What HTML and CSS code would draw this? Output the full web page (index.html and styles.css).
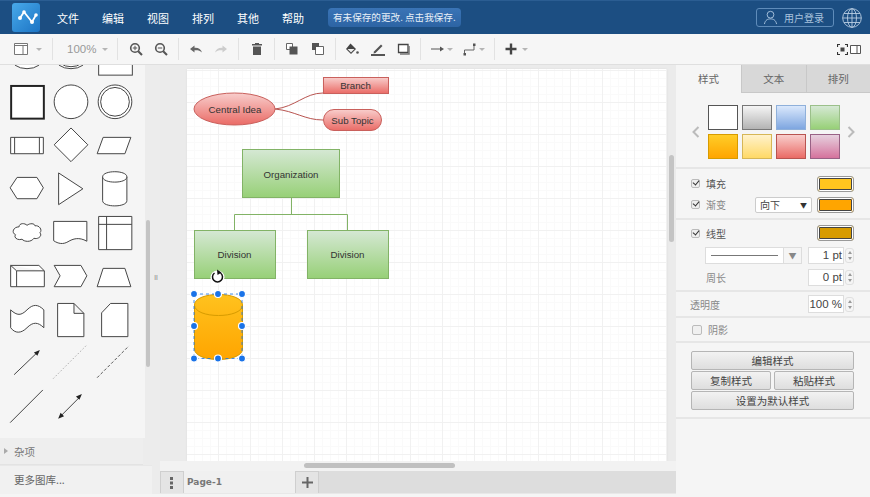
FILE: index.html
```html
<!DOCTYPE html>
<html lang="zh">
<head>
<meta charset="utf-8">
<title>Diagram editor</title>
<link rel="stylesheet" href="styles.css">
</head>
<body>
<div class="app">
  <header class="menubar">
    <div class="logo">
      <svg viewBox="0 0 28 29" width="28" height="29"><path d="M8 15 L12 9 L20 19 L24 12" fill="none" stroke="#fff" stroke-width="1.800"/><circle cx="8" cy="15" r="2" fill="#fff"/><circle cx="12" cy="9" r="1.800" fill="#fff"/><circle cx="20" cy="19" r="2" fill="#fff"/><circle cx="24" cy="12" r="1.800" fill="#fff"/></svg>
    </div>
    <nav class="menus"><span>文件</span><span>编辑</span><span>视图</span><span>排列</span><span>其他</span><span>帮助</span></nav>
    <div class="status">有未保存的更改. 点击我保存.</div>
    <div class="login">
      <svg viewBox="0 0 16 16" width="15" height="15"><circle cx="8" cy="5" r="3.6" fill="none" stroke="#a9c3de" stroke-width="1"/><path d="M1.5 15 C2.5 10.5 5 9.5 8 9.5 S13.500 10.500 14.500 15" fill="none" stroke="#a9c3de" stroke-width="1"/></svg>
      <span>用户登录</span>
    </div>
    <svg class="globe" viewBox="0 0 20 20" width="20" height="20"><g fill="none" stroke="#b9cde2" stroke-width=".9"><circle cx="10" cy="10" r="9.300"/><ellipse cx="10" cy="10" rx="4.500" ry="9.300"/><path d="M10 .7V19.300M.7 10H19.300M2 5.500H18M2 14.500H18"/></g></svg>
  </header>

  <div class="toolbar">
    <div class="group g-view">
      <svg viewBox="0 0 14 14" width="14" height="14"><path d="M.5 1.500H13.500V12.500H.5ZM.5 3.500H13.500M9 3.500V12.500" fill="#fff" stroke="#777"/></svg>
      <i class="caret"></i>
    </div>
    <div class="group g-zoom"><span class="pct">100%</span><i class="caret"></i></div>
    <div class="group g-pair">
      <svg viewBox="0 0 14 14" width="14" height="14"><circle cx="6" cy="6" r="4.300" fill="none" stroke="#555" stroke-width="1.600"/><path d="M9.200 9.200L13 13" stroke="#555" stroke-width="2"/><path d="M3.800 6H8.200M6 3.800V8.200" stroke="#555"/></svg>
      <svg viewBox="0 0 14 14" width="14" height="14"><circle cx="6" cy="6" r="4.300" fill="none" stroke="#555" stroke-width="1.600"/><path d="M9.200 9.200L13 13" stroke="#555" stroke-width="2"/><path d="M3.800 6H8.200" stroke="#555"/></svg>
    </div>
    <div class="group g-pair">
      <svg viewBox="0 0 14 14" width="14" height="14"><path d="M1 7L5.500 3.500V5.800C9.500 5.500 12 7.500 13 10.500C11 8.500 9 8 5.500 8.200V10.500Z" fill="#666"/></svg>
      <svg viewBox="0 0 14 14" width="14" height="14"><path d="M13 7L8.500 3.500V5.800C4.500 5.500 2 7.500 1 10.500C3 8.500 5 8 8.500 8.200V10.500Z" fill="#ccc"/></svg>
    </div>
    <div class="group g-one">
      <svg viewBox="0 0 14 14" width="14" height="14"><path d="M2 2H5V1H9V2H12V3.500H2ZM3 4.500H11V13H3Z" fill="#555"/></svg>
    </div>
    <div class="group g-pair g-order">
      <svg viewBox="0 0 14 14" width="14" height="14"><path d="M1.500 1.500H7.500V7.500H1.500Z" fill="#fff" stroke="#666"/><path d="M4.500 4.500H12.500V12.500H4.500Z" fill="#555"/></svg>
      <svg viewBox="0 0 14 14" width="14" height="14"><path d="M4.500 4.500H12.500V12.500H4.500Z" fill="#fff" stroke="#666"/><path d="M1 1H8V8H1Z" fill="#555"/><path d="M5 5H8V8H5Z" fill="#fff"/></svg>
    </div>
    <div class="group g-style">
      <svg viewBox="0 0 14 14" width="14" height="14"><path d="M5.500 1.500L11 7L6 12L1 7Z" fill="#444"/><path d="M2.500 7H9.500L6 10.500Z" fill="#eee"/><circle cx="12.500" cy="10.500" r="1.300" fill="#555"/></svg>
      <svg viewBox="0 0 14 14" width="14" height="14"><path d="M3 9.500L10 2.500L11.500 4L4.500 11L2.500 11.500Z" fill="#555"/><path d="M0 13H14" stroke="#555" stroke-width="2"/></svg>
      <svg viewBox="0 0 14 14" width="14" height="14"><path d="M1.500 2.500H11V10.500H1.500Z" fill="#fff" stroke="#444" stroke-width="1.300"/><path d="M12 4V12H3" fill="none" stroke="#777" stroke-width="1.500"/></svg>
    </div>
    <div class="group g-conn">
      <span class="tool"><svg viewBox="0 0 13 8" width="13" height="8"><path d="M0 4H10" stroke="#555"/><path d="M9 1.500L13 4L9 6.500Z" fill="#555"/></svg><i class="caret"></i></span>
      <span class="tool"><svg viewBox="0 0 13 13" width="13" height="13"><path d="M1.500 11.500V7H11V1.500" fill="none" stroke="#666"/><rect x=".5" y="10" width="2.500" height="2.500" fill="#555"/><rect x="10" y=".5" width="2.500" height="2.500" fill="#555"/></svg><i class="caret"></i></span>
    </div>
    <div class="group g-plus">
      <svg viewBox="0 0 12 12" width="12" height="12"><path d="M6 .5V11.500M.5 6H11.500" stroke="#444" stroke-width="2.400"/></svg>
      <i class="caret"></i>
    </div>
    <div class="tool-right">
      <svg viewBox="0 0 11 11" width="11" height="11"><path d="M.5 3V.5H3M8 .5H10.500V3M10.500 8V10.500H8M3 10.500H.5V8" fill="none" stroke="#333" stroke-width="1.200"/><rect x="3.500" y="3.500" width="4" height="4" fill="#444"/></svg>
      <svg viewBox="0 0 11 11" width="11" height="11"><path d="M.5 1.500H10.500V9.500H.5ZM7 1.500V9.500" fill="#fff" stroke="#555"/></svg>
    </div>
  </div>

  <div class="main">
    <aside class="sidebar">
      <div class="library">
        <div class="shapes">
          <svg viewBox="0 0 44 44"><ellipse cx="22" cy="21" rx="17" ry="12"/></svg>
          <svg viewBox="0 0 44 44"><ellipse cx="22" cy="21" rx="17" ry="12"/><ellipse cx="22" cy="20" rx="15" ry="11"/></svg>
          <svg viewBox="0 0 44 44"><rect x="5.500" y="9.500" width="34" height="30"/></svg>

          <svg viewBox="0 0 44 44"><rect class="thick" x="6" y="6" width="33" height="33"/></svg>
          <svg viewBox="0 0 44 44"><circle cx="22" cy="22" r="17"/></svg>
          <svg viewBox="0 0 44 44"><circle cx="22" cy="22" r="17"/><circle cx="22" cy="22" r="14.500"/></svg>

          <svg viewBox="0 0 44 44"><path d="M5.500 14.500H38.500V31H5.500ZM9.500 14.500V31M34.500 14.500V31"/></svg>
          <svg viewBox="0 0 44 44"><path d="M22 5L39 22L22 39L5 22Z"/></svg>
          <svg viewBox="0 0 44 44"><path d="M10 14.500H38L32 31H4Z"/></svg>

          <svg viewBox="0 0 44 44"><path d="M5 21L12 10.500H32L38.500 21L32 32H12Z"/></svg>
          <svg viewBox="0 0 44 44"><path d="M9.500 6L34 22L9.500 38Z"/></svg>
          <svg viewBox="0 0 44 44"><path d="M9.500 10C9.500 3 34 3 34 10V34C34 41 9.500 41 9.500 34Z"/><path d="M9.500 10C9.500 17 34 17 34 10"/></svg>

          <svg viewBox="0 0 44 44"><path d="M14 17C14 13 20 13 22 15.500C25 13 30 13.500 30 16C34 15 38 20 35 23C38 26 33 30 29 28.500C26 33 19 32 17 29.500C13 31 8 28 10.500 25C6 23 8 17 14 17Z"/></svg>
          <svg viewBox="0 0 44 44"><path d="M4.500 11.500H38V31.500C30 27 24 29 19 32C14 35 9 34 4.500 31Z"/></svg>
          <svg viewBox="0 0 44 44"><path d="M5.500 6.500H39V40H5.500ZM5.500 14.500H39M13.500 6.500V40"/></svg>

          <svg viewBox="0 0 44 44"><path d="M5.500 11.500H34L39.500 17V33H5.500ZM5.500 11.500L11.500 17H39.500M11.500 17V33"/></svg>
          <svg viewBox="0 0 44 44"><path d="M5 11.500H32L38 22L32 33H5L11 22Z"/></svg>
          <svg viewBox="0 0 44 44"><path d="M10 14.500H32L38 33H4Z"/></svg>

          <svg viewBox="0 0 44 44"><path d="M5.500 12C12 18 16 18 22 12C28 6 33 6 39 12V30C33 24 28 24 22 30C16 36 10 36 5.500 30Z"/></svg>
          <svg viewBox="0 0 44 44"><path d="M8.500 5.500H25L35 15.500V39H8.500ZM25 5.500V15.500H35"/></svg>
          <svg viewBox="0 0 44 44"><path d="M17.500 5.500H35V39H8.500V15Z"/></svg>

          <svg viewBox="0 0 44 44"><path d="M9 34L33 11"/><path class="solid" d="M35 9L32.500 15L29 11.500Z"/></svg>
          <svg viewBox="0 0 44 44"><path class="dots" d="M4 38L38 4"/></svg>
          <svg viewBox="0 0 44 44"><path class="dash" d="M4 37L36 5"/></svg>

          <svg viewBox="0 0 44 44"><path d="M5 38L38 5"/></svg>
          <svg viewBox="0 0 44 44"><path d="M11 32L31 12"/><path class="solid" d="M33 9L30.500 15L27 11.500ZM9 34L11.500 28L15 31.500Z"/></svg>
        </div>
      </div>
      <div class="section-head"><i class="tri"></i><span>杂项</span></div>
      <div class="more">更多图库...</div>
      <div class="side-thumb"></div>
    </aside>
    <div class="splitter"><span>II</span></div>
    <section class="center">
      <div class="canvas">
        <div class="page">
          <svg class="diagram" viewBox="187 69 480 392">
            <defs>
              <linearGradient id="red" x1="0" y1="0" x2="0" y2="1"><stop offset="0" stop-color="#f8cecc"/><stop offset="1" stop-color="#ea6b66"/></linearGradient>
              <linearGradient id="green" x1="0" y1="0" x2="0" y2="1"><stop offset="0" stop-color="#d5e8d4"/><stop offset="1" stop-color="#97d077"/></linearGradient>
              <linearGradient id="orange" x1="0" y1="0" x2="0" y2="1"><stop offset="0" stop-color="#ffc21e"/><stop offset="1" stop-color="#ffa500"/></linearGradient>
            </defs>
            <g class="edge-red">
              <path d="M275 109C295 107 305 93 323 93"/>
              <path d="M275 109C295 111 305 120 323 120"/>
            </g>
            <ellipse class="red" cx="234.500" cy="109" rx="40.500" ry="16"/>
            <rect class="red" x="323.500" y="77.500" width="65" height="16"/>
            <rect class="red" x="323.500" y="109.500" width="58" height="21" rx="10.500"/>
            <text x="235" y="113">Central Idea</text>
            <text x="355.500" y="89">Branch</text>
            <text x="352.500" y="123.500">Sub Topic</text>
            <path class="edge-green" d="M291.500 198V214M234.500 230V214.500H347.500V230"/>
            <rect class="green" x="242.500" y="149.500" width="97" height="48"/>
            <rect class="green" x="194.500" y="230.500" width="81" height="48"/>
            <rect class="green" x="307.500" y="230.500" width="81" height="48"/>
            <text x="291" y="177.500">Organization</text>
            <text x="234.500" y="258">Division</text>
            <text x="347.500" y="258">Division</text>
            <path class="cyl" d="M194.500 305C194.500 291 242.500 291 242.500 305V349C242.500 363 194.500 363 194.500 349Z"/>
            <path class="cyl-top" d="M194.500 305C194.500 319 242.500 319 242.500 305"/>
            <rect class="sel" x="194" y="294" width="48" height="64.500"/>
            <g class="handles">
              <circle cx="194" cy="294" r="3.500"/><circle cx="218" cy="294" r="3.500"/><circle cx="242" cy="294" r="3.500"/>
              <circle cx="194" cy="326" r="3.500"/><circle cx="242" cy="326" r="3.500"/>
              <circle cx="194" cy="358.500" r="3.500"/><circle cx="218" cy="358.500" r="3.500"/><circle cx="242" cy="358.500" r="3.500"/>
            </g>
            <circle cx="217.500" cy="277.500" r="7" fill="#fff"/>
            <path class="rot" d="M220.500 273A5 5 0 1 1 214.500 273"/>
            <path d="M217 269.500L221.500 272.500L217.500 275Z" fill="#111"/>
          </svg>
        </div>
      </div>
      <div class="hbar"></div>
      <div class="vthumb"></div>
      <div class="hthumb"></div>
      <footer class="pages">
        <div class="page-btn"><svg viewBox="0 0 4 12" width="4" height="12"><path d="M0 0H3V3H0ZM0 4.500H3V7.500H0ZM0 9H3V12H0Z" fill="#666"/></svg></div>
        <div class="page-tab">Page-1</div>
        <div class="page-btn"><svg viewBox="0 0 11 11" width="11" height="11"><path d="M5.500 0V11M0 5.500H11" stroke="#666" stroke-width="2"/></svg></div>
      </footer>
    </section>
    <aside class="panel">
      <div class="tabs"><div class="tab active">样式</div><div class="tab">文本</div><div class="tab">排列</div></div>
      <div class="block swatches-block">
        <svg class="chev" viewBox="0 0 8 12" width="8" height="12"><path d="M6.500 1L1.500 6L6.500 11" fill="none" stroke="#bbb" stroke-width="2"/></svg>
        <div class="swatches">
          <i class="sw s-white"></i><i class="sw s-gray"></i><i class="sw s-blue"></i><i class="sw s-green"></i>
          <i class="sw s-orange"></i><i class="sw s-yellow"></i><i class="sw s-red"></i><i class="sw s-pink"></i>
        </div>
        <svg class="chev" viewBox="0 0 8 12" width="8" height="12"><path d="M1.500 1L6.500 6L1.500 11" fill="none" stroke="#bbb" stroke-width="2"/></svg>
      </div>
      <div class="block fill-block">
        <div class="row">
          <i class="check on"></i><span class="lbl dark">填充</span>
          <span class="color c-fill"></span>
        </div>
        <div class="row">
          <i class="check on"></i><span class="lbl">渐变</span>
          <span class="select">向下<b>▼</b></span>
          <span class="color c-grad"></span>
        </div>
      </div>
      <div class="block line-block">
        <div class="row">
          <i class="check on"></i><span class="lbl dark">线型</span>
          <span class="color c-line"></span>
        </div>
        <div class="row">
          <span class="linesel"><span class="ln"></span><span class="ar"><b>▼</b></span></span>
          <span class="input">1 pt</span><span class="spin"></span>
        </div>
        <div class="row">
          <span class="lbl solo">周长</span>
          <span class="input">0 pt</span><span class="spin"></span>
        </div>
      </div>
      <div class="block op-block">
        <span class="lbl">透明度</span>
        <span class="input pct-in">100 %</span><span class="spin"></span>
      </div>
      <div class="block shadow-block"><i class="check"></i><span class="lbl">阴影</span></div>
      <div class="block btn-block">
        <button class="btn">编辑样式</button>
        <div class="btn-row"><button class="btn">复制样式</button><button class="btn">粘贴样式</button></div>
        <button class="btn">设置为默认样式</button>
      </div>
    </aside>
  </div>
  <div class="bottom"></div>
</div>
</body>
</html>
```
FILE: styles.css
```css
* { box-sizing: border-box; }
html, body { margin: 0; height: 100%; overflow: hidden; }
body { font-family: "Noto Sans CJK SC", "Liberation Sans", sans-serif; color: #555; background: #f5f5f5; }
.app { width: 870px; height: 497px; display: flex; flex-direction: column; }
i, b { font-style: normal; font-weight: normal; }

/* top menu */
.menubar { flex: none; height: 34px; background: #1c4e82; border-top: 1px solid #2b5d92; display: flex; align-items: center; color: #fff; }
.logo { margin-left: 12px; width: 28px; height: 29px; border-radius: 3px; background: linear-gradient(135deg, #48a9ea, #1c74c4); display: flex; }
.menus { display: flex; margin-left: 17px; width: 271px; font-size: 11px; }
.menus span { width: 45px; flex: none; }
.status { width: 133px; height: 19px; border-radius: 4px; background: linear-gradient(#3a74b6, #2d64a4); font-size: 9.600px; line-height: 19px; padding-left: 5px; color: #e8f0f8; white-space: nowrap; overflow: hidden; }
.login { margin-left: auto; width: 78px; height: 19px; border: 1px solid #5f8cba; border-radius: 3px; display: flex; align-items: center; gap: 6px; padding-left: 6px; font-size: 10px; color: #a9c3de; }
.globe { margin: 0 8px 0 8px; }

/* toolbar */
.toolbar { flex: none; height: 31px; background: #f6f6f6; border-bottom: 1px solid #dfdfdf; display: flex; align-items: center; }
.group { flex: none; height: 22px; border-right: 1px solid #e2e2e2; display: flex; align-items: center; justify-content: center; }
.caret { display: block; width: 0; height: 0; border: 3px solid transparent; border-top: 3px solid #b5b5b5; border-bottom: 0; }
.g-view { width: 53px; gap: 8px; justify-content: flex-start; padding-left: 14px; }
.g-zoom { width: 65px; gap: 6px; justify-content: flex-start; padding-left: 14px; }
.pct { font-size: 11.500px; color: #999; font-family: "Liberation Sans", sans-serif; }
.g-pair { width: 61px; gap: 11px; }
.g-pair + .g-pair { width: 60px; }
.g-one { width: 36px; }
.g-pair.g-order { width: 61px; gap: 12px; }
.g-style { width: 85px; gap: 12px; }
.g-conn { width: 74px; gap: 10px; justify-content: flex-start; padding-left: 10px; }
.tool { display: flex; align-items: center; gap: 3px; }
.g-plus { width: 44px; border: 0; gap: 5px; justify-content: flex-start; padding-left: 10px; }
.tool-right { margin-left: auto; margin-right: 9px; display: flex; gap: 2px; }

/* main area */
.main { flex: 1; min-height: 0; display: flex; }
.sidebar { flex: none; width: 152px; position: relative; background: #ececec; display: flex; flex-direction: column; }
.library { flex: 1; min-height: 0; width: 145px; background: #f5f5f5; overflow: hidden; }
.shapes { margin: -29px 0 0 5px; display: grid; grid-template-columns: repeat(3, 44px); grid-auto-rows: 43.600px; }
.shapes svg { width: 44px; height: 43.600px; fill: #fff; stroke: #444; stroke-width: 1; display: block; }
.shapes .thick { stroke-width: 2; stroke: #222; }
.shapes .solid { fill: #222; stroke: none; }
.shapes .dots { stroke: #aaa; stroke-dasharray: 1.500 2; }
.shapes .dash { stroke: #555; stroke-dasharray: 3 2; }
.section-head { flex: none; height: 27px; width: 143px; background: #eeeeee; border-bottom: 1px solid #e3e3e3; display: flex; align-items: center; gap: 6px; padding-left: 4px; font-size: 10.500px; color: #777; }
.tri { border: 3px solid transparent; border-left: 4px solid #aaa; border-right: 0; }
.more { flex: none; height: 29px; background: #f1f1f1; border-top: 1px solid #e8e8e8; padding-left: 14px; font-size: 10.500px; line-height: 27px; color: #666; }
.side-thumb { position: absolute; left: 146px; top: 155px; width: 4px; height: 147px; background: #c4c4c4; border-radius: 2px; }
.splitter { flex: none; width: 8px; background: #ececec; display: flex; justify-content: center; }
.splitter span { font-size: 6px; margin-top: 209px; color: #777; line-height: 8px; }
.center { flex: none; width: 516px; position: relative; background: #ebebeb; display: flex; flex-direction: column; }
.canvas { flex: 1; min-height: 0; padding: 4px 9px 0 27px; }
.page { width: 480px; height: 392px; box-shadow: 0 0 2px #ddd; background-color: #fff;
  background-image:
    linear-gradient(#f1f1f1 1px, transparent 1px),
    linear-gradient(90deg, #f1f1f1 1px, transparent 1px),
    linear-gradient(#fafafa 1px, transparent 1px),
    linear-gradient(90deg, #fafafa 1px, transparent 1px);
  background-size: 32px 32px, 32px 32px, 8px 8px, 8px 8px;
  background-position: 0 1px, -1px 0, 0 1px, -1px 0; }
.diagram { width: 480px; height: 392px; display: block; }
.diagram text { font: 9.700px "Liberation Sans", sans-serif; fill: #333; text-anchor: middle; }
.red { fill: url(#red); stroke: #c9605c; }
.green { fill: url(#green); stroke: #82b366; }
.edge-red { fill: none; stroke: #b85450; }
.edge-green { fill: none; stroke: #82b366; }
.cyl { fill: url(#orange); stroke: #d79b00; }
.cyl-top { fill: none; stroke: #d79b00; }
.sel { fill: none; stroke: #1a73e8; stroke-dasharray: 3 3; stroke-width: .8; }
.handles circle { fill: #1a73e8; stroke: #fff; stroke-width: 1.200; }
.rot { fill: none; stroke: #111; stroke-width: 1.500; }
.hbar { flex: none; height: 10px; background: #f2f2f2; }
.vthumb { position: absolute; left: 509px; top: 90px; width: 5px; height: 87px; background: #c4c4c4; border-radius: 3px; }
.hthumb { position: absolute; left: 144px; top: 398px; width: 151px; height: 5px; background: #c0c0c0; border-radius: 3px; }
.pages { flex: none; height: 23px; background: #dddddd; display: flex; border-bottom: 1px solid #e8e8e8; }
.page-btn { width: 24px; background: #e4e4e4; border: 1px solid #cfcfcf; border-bottom: 0; display: flex; align-items: center; justify-content: center; }
.page-tab { width: 111px; background: #f0f0f0; font: bold 9px/23px "DejaVu Sans", sans-serif; color: #777; padding-left: 3px; }

/* format panel */
.panel { flex: none; width: 194px; background: #f5f5f5; }
.tabs { display: flex; height: 28px; }
.tab { flex: 1; background: #d8d8d8; border-left: 1px solid #c8c8c8; border-bottom: 1px solid #c8c8c8; font-size: 10.500px; line-height: 28px; text-align: center; color: #666; }
.tab.active { flex: none; width: 65px; background: #f5f5f5; border: 0; }
.block { border-bottom: 2px solid #e6e6e6; }
.swatches-block { height: 76px; display: flex; align-items: center; padding: 3px 15px 0 16px; justify-content: space-between; }
.swatches { display: grid; grid-template-columns: repeat(4, 30px); grid-auto-rows: 25px; gap: 4px; }
.sw { display: block; border: 1px solid #b0b0b0; }
.s-white { background: #fff; border: 1px solid #555; }
.s-gray { background: linear-gradient(#f5f5f5, #b3b3b3); border-color: #777; }
.s-blue { background: linear-gradient(#dae8fc, #7ea6e0); border-color: #8fb0da; }
.s-green { background: linear-gradient(#d5e8d4, #97d077); border-color: #9bc08a; }
.s-orange { background: linear-gradient(#ffcd28, #ffa500); border-color: #d79b00; }
.s-yellow { background: linear-gradient(#fff2cc, #ffd966); border-color: #d6b656; }
.s-red { background: linear-gradient(#f8cecc, #ea6b66); border-color: #b85450; }
.s-pink { background: linear-gradient(#e6d0de, #d5739d); border-color: #996185; }
.row { display: flex; align-items: center; padding-left: 15px; }
.check { flex: none; width: 9px; height: 9px; border: 1px solid #bbb; border-radius: 2px; background: #eee; position: relative; }
.check.on::after { content: ""; position: absolute; left: 1px; top: 0; width: 5px; height: 3px; border-left: 1.500px solid #333; border-bottom: 1.500px solid #333; transform: rotate(-50deg); }
.lbl { font-size: 10px; color: #888; margin-left: 6px; white-space: nowrap; flex: none; }
.lbl.dark { color: #555; }
.lbl.solo { margin-left: 15px; }
.color { margin-left: auto; margin-right: 16px; width: 37px; height: 16px; border: 1px solid #999; border-radius: 3px; background: #fff; padding: 1px; display: block; background-clip: padding-box; box-shadow: inset 0 0 0 1px #fff; flex: none; }
.c-fill { background: #ffc61f; outline: 1px solid #444; outline-offset: -3px; }
.c-grad { background: #ffa500; outline: 1px solid #444; outline-offset: -3px; }
.c-line { background: #d79b00; outline: 1px solid #444; outline-offset: -3px; }
.fill-block { height: 51px; padding-top: 4px; }
.fill-block .row { height: 21px; }
.select { margin-left: 29px; width: 57px; height: 16px; flex: none; background: #fff; border: 1px solid #ccc; border-radius: 2px; font-size: 10px; line-height: 14px; padding-left: 4px; color: #444; display: flex; justify-content: space-between; }
.select b { font-size: 7px; padding-right: 4px; color: #333; }
.select + .color { margin-left: 5px; }
.line-block { height: 72px; padding-top: 2px; }
.line-block .row { height: 22px; }
.linesel { margin-left: 14px; width: 97px; height: 17px; background: #fff; border: 1px solid #ddd; display: flex; align-items: center; }
.ln { flex: 1; height: 1px; background: #777; margin: 0 5px; }
.ar { width: 18px; height: 15px; border-left: 1px solid #ddd; text-align: center; font-size: 8px; line-height: 15px; color: #888; background: #f5f5f5; }
.input { margin-left: auto; width: 36px; height: 17px; background: #fff; border: 1px solid #ddd; font: 11.500px/15px "Liberation Sans", sans-serif; color: #444; text-align: right; padding-right: 1px; }
.spin { flex: none; width: 9px; height: 15px; margin: 0 16px 0 1px; display: flex; flex-direction: column; justify-content: space-between; align-items: center; padding: 2px 0; border: 1px solid #e0e0e0; border-radius: 3px; }
.spin::before { content: ""; border: 2.500px solid transparent; border-bottom: 3px solid #999; border-top: 0; }
.spin::after { content: ""; border: 2.500px solid transparent; border-top: 3px solid #999; border-bottom: 0; }
.op-block { height: 26px; display: flex; align-items: center; padding-left: 8px; }
.pct-in { height: 18px; line-height: 16px; }
.shadow-block { height: 25px; display: flex; align-items: center; padding-left: 16px; }
.shadow-block .check { width: 10px; height: 10px; background: #f0f0f0; }
.btn-block { height: 76px; padding: 8px 16px 0 15px; display: flex; flex-direction: column; gap: 1px; }
.btn { height: 19px; flex: none; width: 100%; padding: 0; border: 1px solid #b5b5b5; border-radius: 2px; background: linear-gradient(#f2f2f2, #dedede); font: 10.500px/17px "Noto Sans CJK SC", sans-serif; color: #444; }
.btn-row { display: flex; gap: 3px; height: 19px; }
.btn-row .btn { flex: 1; width: auto; }
.bottom { flex: none; height: 3px; background: #f5f5f5; }
```
